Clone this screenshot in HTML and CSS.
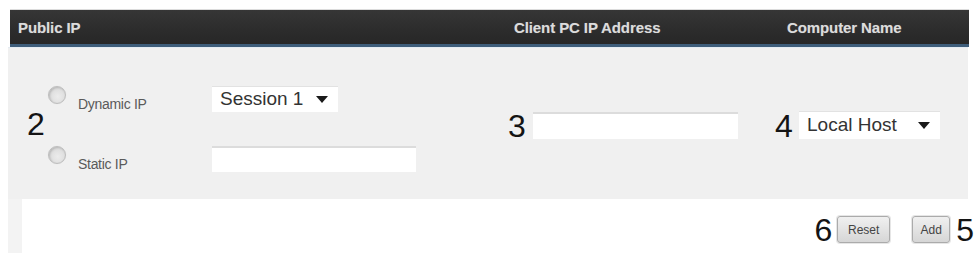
FILE: index.html
```html
<!DOCTYPE html>
<html>
<head>
<meta charset="utf-8">
<link rel="stylesheet" href="styles.css">
</head>
<body>
<div class="page">
  <div class="header">
    <div class="hcol hcol-public">Public IP</div>
    <div class="hcol hcol-client">Client PC IP Address</div>
    <div class="hcol hcol-name">Computer Name</div>
  </div>
  <div class="panel">
    <div class="num num-2">2</div>
    <div class="radios">
      <label class="radio-row"><span class="radio"></span><span class="radio-label">Dynamic IP</span></label>
      <label class="radio-row"><span class="radio"></span><span class="radio-label">Static IP</span></label>
    </div>
    <div class="inputs">
      <div class="select select-session"><span>Session 1</span><span class="caret"></span></div>
      <div class="textbox textbox-static"></div>
    </div>
    <div class="num num-3">3</div>
    <div class="textbox textbox-client"></div>
    <div class="num num-4">4</div>
    <div class="select select-host"><span>Local Host</span><span class="caret"></span></div>
  </div>
  <div class="footer">
    <div class="num">6</div>
    <button class="btn btn-reset">Reset</button>
    <button class="btn btn-add">Add</button>
    <div class="num">5</div>
  </div>
</div>
</body>
</html>
```

FILE: styles.css
```css
* { box-sizing: border-box; }
html, body {
  margin: 0;
  padding: 0;
  background: #ffffff;
  font-family: "Liberation Sans", Arial, sans-serif;
}
.page {
  width: 979px;
  height: 253px;
  padding-top: 9px;
  padding-left: 8px;
  overflow: hidden;
}
.header {
  margin-left: 2px;
  width: 959px;
  height: 38px;
  background: linear-gradient(#363636, #2c2c2c 60%, #272727);
  border-top: 1px solid #dcdcdc;
  border-bottom: 3px solid #3e5d7a;
  display: grid;
  grid-template-columns: 496px 273px 1fr;
  align-items: center;
  padding-left: 8px;
  padding-top: 1px;
}
.hcol {
  color: #dcdcdc;
  font-weight: bold;
  font-size: 15px;
  letter-spacing: -0.1px;
  text-shadow: 0 0 1px rgba(255,255,255,0.3);
}
.panel {
  width: 960px;
  height: 152px;
  background: #f0f0f0;
  border-top: 1px solid #e4ebf2;
  display: flex;
  align-items: center;
  padding-left: 19px;
}
.num {
  font-size: 32px;
  line-height: 32px;
  color: #141414;
}
.num-2 { width: 21px; }
.radios {
  display: flex;
  flex-direction: column;
  gap: 33px;
  width: 164px;
  padding-top: 11px;
}
.radio-row {
  display: flex;
  align-items: flex-start;
  height: 27px;
}
.radio {
  width: 18px;
  height: 18px;
  border-radius: 50%;
  border: 1px solid #bdbdbd;
  background: radial-gradient(circle at 55% 60%, #ececec 0%, #e0e0e0 50%, #cfcfcf 100%);
  box-shadow: inset 1px 1px 2px rgba(0,0,0,0.15), 0 0 1px rgba(0,0,0,0.1);
  flex: none;
}
.radio-label {
  margin-left: 12px;
  margin-top: 10px;
  font-size: 14px;
  color: #5a5a5a;
  letter-spacing: -0.3px;
}
.inputs {
  display: flex;
  flex-direction: column;
  gap: 34px;
  width: 296px;
  padding-top: 10px;
}
.select {
  height: 26px;
  background: #ffffff;
  border-top: 1px solid #e2e2e2;
  display: flex;
  align-items: center;
  justify-content: space-between;
  font-size: 19px;
  color: #333;
  padding: 0 10px 0 8px;
}
.select-session { width: 126px; }
.caret {
  width: 0;
  height: 0;
  border-left: 6px solid transparent;
  border-right: 6px solid transparent;
  border-top: 7px solid #1a1a1a;
}
.textbox {
  height: 26px;
  background: #ffffff;
  border-top: 2px solid #dcdcdc;
}
.textbox-static { width: 204px; }
.num-3 { width: 25px; padding-top: 5px; }
.textbox-client { width: 205px; height: 27px; margin-top: 4px; }
.num-4 { margin-left: 37px; width: 24px; padding-top: 4px; }
.select-host { width: 141px; height: 28px; margin-top: 2px; }
.footer {
  width: 966px;
  height: 55px;
  border-left: 14px solid #f3f3f3;
  display: flex;
  align-items: center;
  justify-content: flex-end;
  padding-top: 6px;
}
.footer .num:first-child { margin-right: 5px; }
.btn {
  height: 27px;
  font-family: "Liberation Sans", Arial, sans-serif;
  font-size: 12px;
  color: #444;
  background: linear-gradient(#f0f0f0, #d6d6d6);
  border: 1px solid #ababab;
  border-radius: 3px;
  box-shadow: 0 0 0 1px #e6e6e6;
  padding: 0;
}
.btn-reset { width: 53px; margin-right: 22px; }
.btn-add { width: 38px; margin-right: 6px; }
```
